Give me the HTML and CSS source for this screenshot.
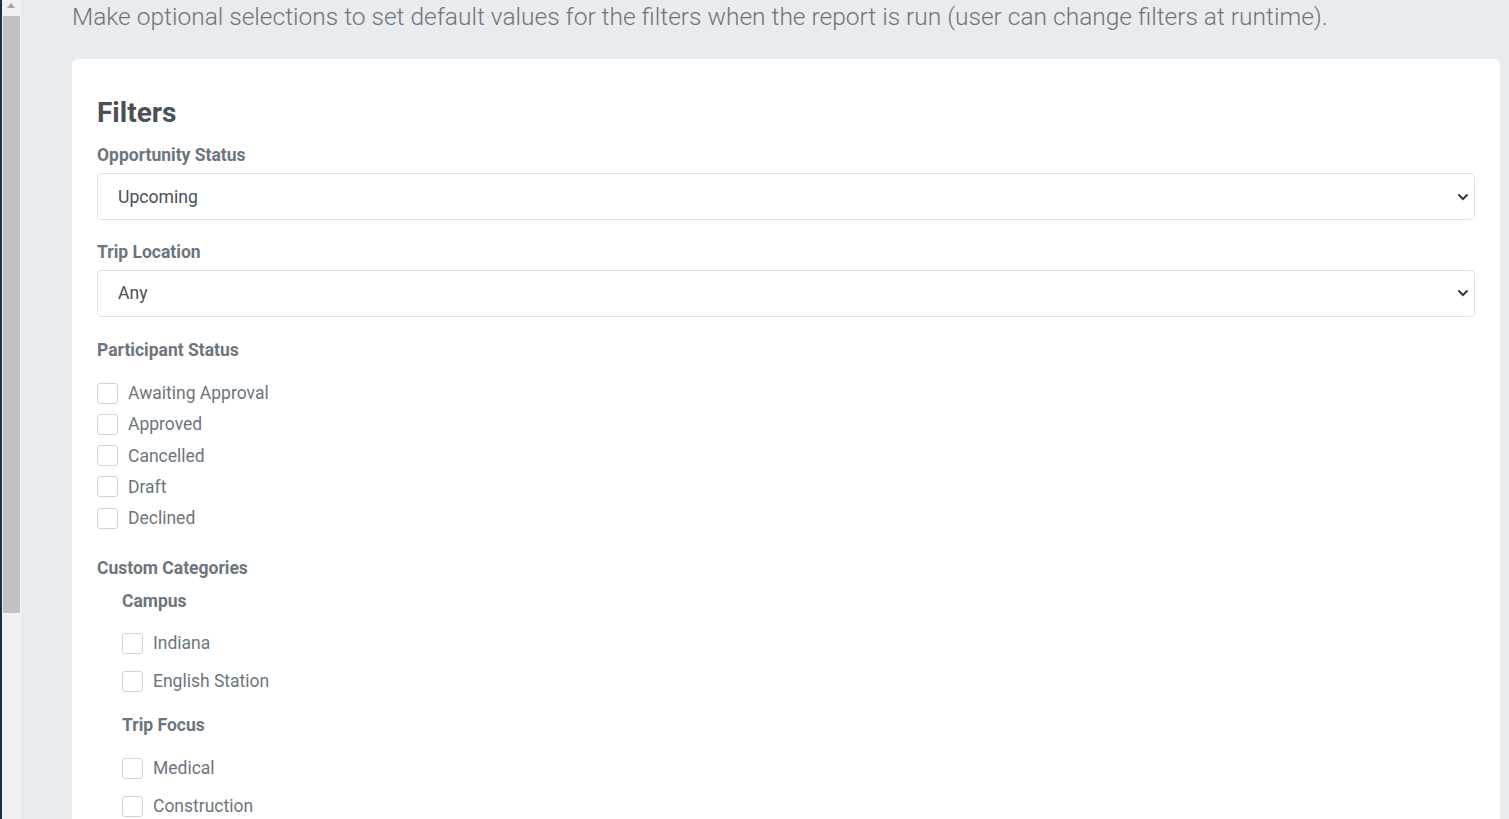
FILE: index.html
```html
<!DOCTYPE html>
<html>
<head>
<meta charset="utf-8">
<link rel="stylesheet" href="styles.css">
</head>
<body>
<div class="shell">
  <div class="edge"></div>
  <div class="scrollbar">
    <div class="sb-arrow"></div>
    <div class="sb-thumb"></div>
  </div>
  <div class="main">
    <p class="intro">Make optional selections to set default values for the filters when the report is run (user can change filters at runtime).</p>
    <div class="card">
      <h2 class="card-title">Filters</h2>

      <div class="field">
        <div class="label">Opportunity Status</div>
        <div class="select"><span>Upcoming</span>
          <svg class="chev" width="12" height="8" viewBox="0 0 12 8"><path d="M1.5 1.5 L6 6 L10.5 1.5" fill="none" stroke="#343a40" stroke-width="2"/></svg>
        </div>
      </div>

      <div class="field location">
        <div class="label">Trip Location</div>
        <div class="select"><span>Any</span>
          <svg class="chev" width="12" height="8" viewBox="0 0 12 8"><path d="M1.5 1.5 L6 6 L10.5 1.5" fill="none" stroke="#343a40" stroke-width="2"/></svg>
        </div>
      </div>

      <div class="field participant">
        <div class="label">Participant Status</div>
        <div class="checks tight">
          <label class="check"><span class="box"></span>Awaiting Approval</label>
          <label class="check"><span class="box"></span>Approved</label>
          <label class="check"><span class="box"></span>Cancelled</label>
          <label class="check"><span class="box"></span>Draft</label>
          <label class="check"><span class="box"></span>Declined</label>
        </div>
      </div>

      <div class="field custom">
        <div class="label">Custom Categories</div>
        <div class="sub">
          <div class="sublabel">Campus</div>
          <div class="checks loose first">
            <label class="check"><span class="box"></span>Indiana</label>
            <label class="check"><span class="box"></span>English Station</label>
          </div>
          <div class="sublabel second">Trip Focus</div>
          <div class="checks loose next">
            <label class="check"><span class="box"></span>Medical</label>
            <label class="check"><span class="box"></span>Construction</label>
          </div>
        </div>
      </div>
    </div>
  </div>
</div>
</body>
</html>
```

FILE: styles.css
```css
* { box-sizing: border-box; }
html, body { margin: 0; padding: 0; height: 100%; overflow: hidden; }
body {
  font-family: Roboto, "Liberation Sans", sans-serif;
  background: #e9ecef;
}
.shell {
  display: flex;
  height: 819px;
}
.edge {
  width: 2px;
  background: #1d2d4d;
  flex: none;
}
.scrollbar {
  width: 19px;
  flex: none;
  background: #f1f1f1;
  position: relative;
}
.sb-arrow {
  position: absolute;
  left: 5px;
  top: 3px;
  width: 0; height: 0;
  border-left: 4px solid transparent;
  border-right: 4px solid transparent;
  border-bottom: 5px solid #a3a3a3;
}
.sb-thumb {
  position: absolute;
  left: 1px;
  top: 16px;
  width: 17px;
  height: 597px;
  background: #c1c1c1;
}
.main {
  flex: 1;
  padding: 0 9px 0 51px;
}
.intro {
  margin: 0;
  padding-top: 3px;
  font-size: 24.5px;
  font-weight: 300;
  color: #6c757d;
  line-height: 28px;
  white-space: nowrap;
}
.card {
  margin-top: 28px;
  background: #fff;
  border-radius: 6px;
  padding: 34px 25px 40px 25px;
  height: 900px;
}
.card-title {
  margin: 0 0 10px 0;
  font-size: 28px;
  font-weight: 700;
  color: #495057;
  line-height: 40px;
}
.field { margin-bottom: 19.5px; }
.field.location { margin-bottom: 21.5px; }
.field.participant { margin-bottom: 26px; }
.label {
  font-size: 17.5px;
  font-weight: 700;
  color: #6c757d;
  line-height: 24px;
  margin-bottom: 6px;
}
.select {
  height: 47px;
  border: 1px solid #dee2e6;
  border-radius: 4px;
  display: flex;
  align-items: center;
  justify-content: space-between;
  padding: 0 5px 0 20px;
  font-size: 17.6px;
  color: #495057;
}
.checks { display: flex; flex-direction: column; }
.checks.tight { padding-top: 13px; gap: 7.25px; }
.checks.loose { gap: 14px; }
.checks.loose.first { padding-top: 18px; }
.checks.loose.next { padding-top: 19px; }
.check {
  display: flex;
  align-items: center;
  font-size: 17.5px;
  color: #6c757d;
  line-height: 24px;
}
.box {
  width: 21px;
  height: 21px;
  border: 1px solid #ced4da;
  border-radius: 3px;
  margin-right: 10px;
  background: #fff;
}
.custom .label { margin-bottom: 9px; }
.sub { padding-left: 25px; }
.sublabel {
  font-size: 17.5px;
  font-weight: 700;
  color: #6c757d;
  line-height: 24px;
}
.sublabel.second { margin-top: 20px; }
```
